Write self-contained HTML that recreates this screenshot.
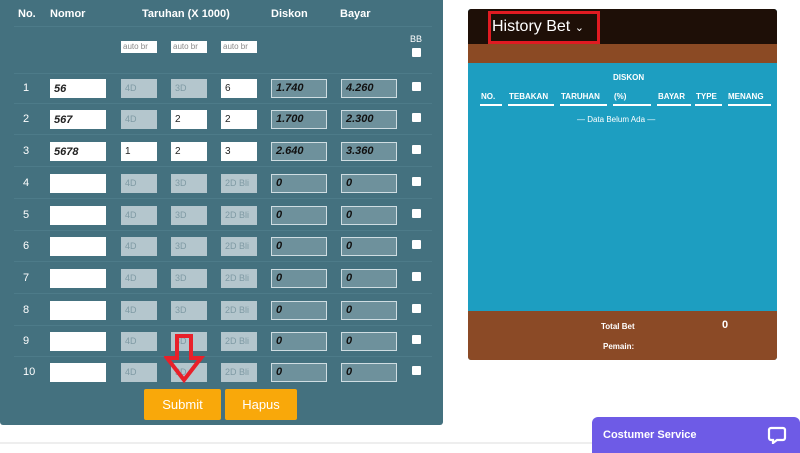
<!DOCTYPE html>
<html><head><style>
*{margin:0;padding:0;box-sizing:border-box}
body{width:800px;height:450px;background:#fff;font-family:"Liberation Sans",sans-serif;position:relative;overflow:hidden}
.a{position:absolute}
#lp{left:0;top:0;width:443px;height:425px;background:#44717f;border-radius:0 0 3px 3px}
.h{color:#fff;font-weight:bold;font-size:11px}
.in{position:absolute;height:19px;background:#fff;font-size:10px;padding:4px 4px;color:#222}
.dis{background:#b4c6cd;color:#7f9aa4;font-size:9px}
.ro{background:#6e919c;border:1px solid #cfdde2;font-style:italic;font-weight:bold;color:#111;font-size:11px;padding:2px 4px}
.nm{font-style:italic;font-weight:bold;font-size:11px}
.cb{position:absolute;width:9px;height:9px;background:#fff;border-radius:1px}
.sep{position:absolute;left:14px;width:418px;height:1px;background:#4d7b89}
.num{position:absolute;left:23px;color:#fff;font-size:11px}
.btn{position:absolute;top:389px;height:31px;background:#f9a80a;color:#fff;font-size:13px;text-align:center;line-height:31px;border-radius:2px}
.th{position:absolute;color:#fff;font-size:8px;font-weight:bold}
.ul{position:absolute;top:104px;height:2px;background:#fff}
</style></head><body>
<div class="a" id="lp"></div>
<div class="a h" style="left:18px;top:8px">No.</div>
<div class="a h" style="left:50px;top:8px">Nomor</div>
<div class="a h" style="left:142px;top:8px">Taruhan (X 1000)</div>
<div class="a h" style="left:271px;top:8px">Diskon</div>
<div class="a h" style="left:340px;top:8px">Bayar</div>
<div class="sep" style="top:26px"></div>
<div class="in" style="left:121px;top:41px;width:36px;height:12px;font-size:8px;padding:1px 2px;color:#888">auto br</div>
<div class="in" style="left:171px;top:41px;width:36px;height:12px;font-size:8px;padding:1px 2px;color:#888">auto br</div>
<div class="in" style="left:221px;top:41px;width:36px;height:12px;font-size:8px;padding:1px 2px;color:#888">auto br</div>
<div class="a" style="left:410px;top:34px;color:#fff;font-size:9px">BB</div>
<div class="cb" style="left:412px;top:48px"></div>
<div class="sep" style="top:73px"></div>
<div id="rows"></div>
<div class="btn" style="left:144px;width:77px">Submit</div>
<div class="btn" style="left:225px;width:72px">Hapus</div>
<svg class="a" style="left:164px;top:333px" width="42" height="52"><path d="M13 3h14v22h10L20 47 3 25h10z" fill="none" stroke="#e8202a" stroke-width="4"/></svg>
<div class="a" style="left:0;top:442px;width:592px;height:2px;background:#eee"></div>

<div class="a" style="left:468px;top:9px;width:309px;height:351px;background:#1d9ec1;border-radius:3px;overflow:hidden">
<div class="a" style="left:0;top:0;width:309px;height:35px;background:#1e0f07"></div>
<div class="a" style="left:0;top:35px;width:309px;height:19px;background:#8b4a24"></div>
<div class="a" style="left:0;top:302px;width:309px;height:49px;background:#8b4a26"></div>
</div>
<div class="a" style="left:488px;top:11px;width:112px;height:33px;border:3px solid #e01b22"></div>
<div class="a" style="left:492px;top:18px;color:#fff;font-size:16px">History Bet <span style="font-size:11px">&#8964;</span></div>
<div class="th" style="left:613px;top:73px">DISKON</div>
<div class="th" style="left:481px;top:92px">NO.</div>
<div class="th" style="left:509px;top:92px">TEBAKAN</div>
<div class="th" style="left:561px;top:92px">TARUHAN</div>
<div class="th" style="left:614px;top:92px">(%)</div>
<div class="th" style="left:658px;top:92px">BAYAR</div>
<div class="th" style="left:696px;top:92px">TYPE</div>
<div class="th" style="left:728px;top:92px">MENANG</div>
<div class="ul" style="left:480px;width:22px"></div>
<div class="ul" style="left:508px;width:46px"></div>
<div class="ul" style="left:560px;width:47px"></div>
<div class="ul" style="left:613px;width:38px"></div>
<div class="ul" style="left:657px;width:34px"></div>
<div class="ul" style="left:695px;width:27px"></div>
<div class="ul" style="left:728px;width:43px"></div>
<div class="a" style="left:577px;top:115px;color:#fff;font-size:8px">— Data Belum Ada —</div>
<div class="th" style="left:601px;top:322px">Total Bet</div>
<div class="a" style="left:722px;top:319px;color:#fff;font-size:11px;font-weight:bold">0</div>
<div class="th" style="left:603px;top:342px">Pemain:</div>

<div class="a" style="left:592px;top:417px;width:208px;height:36px;background:#6e5be6;border-radius:6px 6px 0 0"></div>
<div class="a" style="left:603px;top:429px;color:#fff;font-size:11px;font-weight:bold">Costumer Service</div>
<svg class="a" style="left:767px;top:426px" width="20" height="18"><path d="M4 2h12a2 2 0 0 1 2 2v8a2 2 0 0 1-2 2h-6l-4 3v-3h-2a2 2 0 0 1-2-2V4a2 2 0 0 1 2-2z" fill="none" stroke="#fff" stroke-width="2.2"/></svg>

<script>
var d=[["56","","","6","1.740","4.260"],["567","","2","2","1.700","2.300"],["5678","1","2","3","2.640","3.360"]];
var h="",ys=[88,119,151,183,215,246,278,310,341,372];
for(var i=0;i<10;i++){var y=ys[i],r=d[i];
h+='<div class="num" style="top:'+(y-6)+'px">'+(i+1)+'</div>';
h+='<div class="in nm" style="left:50px;top:'+(y-9)+'px;width:56px">'+(r?r[0]:'')+'</div>';
var ph=["4D","3D","2D Bli"],xs=[121,171,221];
for(var k=0;k<3;k++){var v=r?r[k+1]:"";
if(v)h+='<div class="in" style="left:'+xs[k]+'px;top:'+(y-9)+'px;width:36px">'+v+'</div>';
else if(!(r&&k==2))h+='<div class="in dis" style="left:'+xs[k]+'px;top:'+(y-9)+'px;width:36px">'+ph[k]+'</div>';}
h+='<div class="in ro" style="left:271px;top:'+(y-9)+'px;width:56px">'+(r?r[4]:'0')+'</div>';
h+='<div class="in ro" style="left:341px;top:'+(y-9)+'px;width:56px">'+(r?r[5]:'0')+'</div>';
h+='<div class="cb" style="left:412px;top:'+(y-6)+'px"></div>';
if(i<9)h+='<div class="sep" style="top:'+(y+15)+'px"></div>';}
document.getElementById("rows").innerHTML=h;
</script>
</body></html>
